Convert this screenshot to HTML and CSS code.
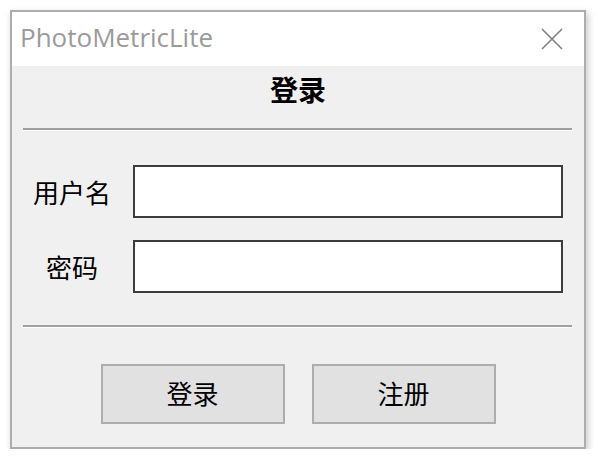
FILE: index.html
```html
<!DOCTYPE html>
<html lang="zh-CN">
<head>
<meta charset="utf-8">
<title>PhotoMetricLite</title>
<link rel="stylesheet" href="styles.css">
</head>
<body>
<div class="window">
  <div class="titlebar">
    <span class="title">PhotoMetricLite</span>
    <svg class="close" width="22" height="22" viewBox="0 0 22 22" aria-hidden="true">
      <path d="M1 1 L21 21 M21 1 L1 21" stroke="#7f7f7f" stroke-width="1.6" fill="none"/>
    </svg>
  </div>
  <div class="content">
    <div class="heading">登录</div>
    <div class="sep sep-top"></div>
    <div class="form">
      <div class="row">
        <label class="label">用户名</label>
        <div class="input"></div>
      </div>
      <div class="row">
        <label class="label">密码</label>
        <div class="input"></div>
      </div>
    </div>
    <div class="sep sep-bottom"></div>
    <div class="buttons">
      <div class="btn">登录</div>
      <div class="btn">注册</div>
    </div>
  </div>
</div>
</body>
</html>
```

FILE: styles.css
```css
html, body {
  margin: 0;
  padding: 0;
  background: #ffffff;
}

body {
  font-family: "Noto Sans CJK SC", "Noto Sans", sans-serif;
  color: #000;
}

.window {
  box-sizing: border-box;
  margin: 10px 0 0 10px;
  width: 576px;
  height: 439px;
  border: 2px solid #adadad;
  background: #f0f0f0;
  box-shadow: 2px 3px 7px rgba(0, 0, 0, 0.22);
  display: flex;
  flex-direction: column;
}

.titlebar {
  height: 54px;
  background: #ffffff;
  display: flex;
  align-items: center;
  justify-content: space-between;
  padding: 0 21px 0 8px;
}

.title {
  font-family: "Open Sans", "Noto Sans", sans-serif;
  font-size: 26px;
  line-height: 50px;
  padding-bottom: 4px;
  color: #9a9a9a;
}

.close {
  display: block;
  width: 22px;
  height: 22px;
}

.content {
  flex: 1;
  display: flex;
  flex-direction: column;
}

.heading {
  margin-top: 3px;
  height: 40px;
  line-height: 40px;
  text-align: center;
  font-size: 28px;
  font-weight: bold;
}

.sep {
  margin: 0 12px 0 11px;
  border-top: 2px solid #a0a0a0;
  border-bottom: 1px solid #ffffff;
}

.sep-top {
  margin-top: 19px;
}

.form {
  margin-top: 34px;
  display: flex;
  flex-direction: column;
  gap: 22px;
  padding: 0 21px 0 8px;
}

.row {
  display: flex;
  align-items: center;
  height: 53px;
}

.label {
  flex: 0 0 113px;
  text-align: center;
  font-size: 26px;
  line-height: 53px;
  padding-right: 9px;
  box-sizing: border-box;
}

.input {
  flex: 1;
  box-sizing: border-box;
  height: 53px;
  background: #ffffff;
  border: 2px solid #3c3c3c;
}

.sep-bottom {
  margin-top: 32px;
}

.buttons {
  margin-top: 36px;
  display: flex;
  justify-content: center;
  gap: 27px;
}

.btn {
  box-sizing: border-box;
  width: 184px;
  height: 60px;
  background: #e1e1e1;
  border: 2px solid #adadad;
  font-size: 26px;
  line-height: 54px;
  text-align: center;
}
```
